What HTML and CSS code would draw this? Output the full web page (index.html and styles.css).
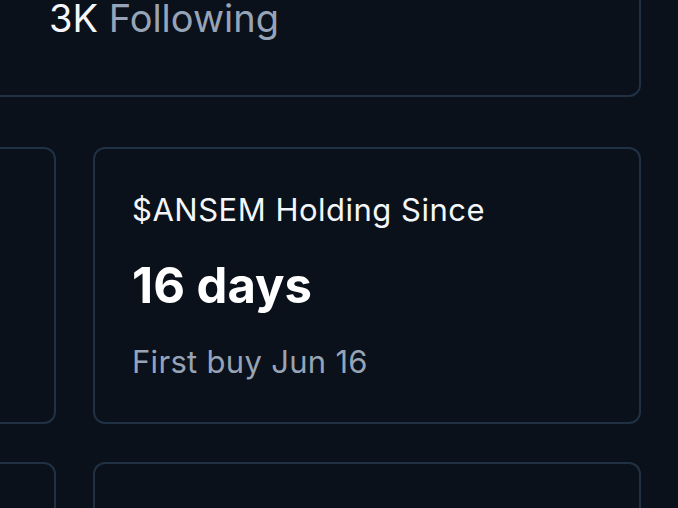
FILE: index.html
```html
<!DOCTYPE html>
<html lang="en">
<head>
<meta charset="utf-8">
<title>Profile</title>
<link rel="stylesheet" href="styles.css">
</head>
<body>
<div class="page">
  <section class="card profile">
    <div class="stats">
      <span class="stat"><span class="num">3K</span> <span class="label">Following</span></span>
    </div>
  </section>
  <div class="grid">
    <section class="card metric"></section>
    <section class="card metric">
      <div class="metric-title">$ANSEM Holding Since</div>
      <div class="metric-value">16 days</div>
      <div class="metric-sub">First buy Jun 16</div>
    </section>
    <section class="card metric"></section>
    <section class="card metric"></section>
  </div>
</div>
</body>
</html>
```

FILE: styles.css
```css
html, body {
  margin: 0;
  padding: 0;
  background: #0a111a;
  overflow: hidden;
}
body {
  font-family: Inter, "Noto Sans", sans-serif;
  color: #f4f6f9;
  height: 508px;
}
.page {
  width: 1133px;
  margin: -122px 0 0 -492px;
  display: flex;
  flex-direction: column;
  gap: 50px;
}
.card {
  border: 2px solid #213144;
  border-radius: 12px;
  box-sizing: border-box;
  background: #0a111a;
}
.profile {
  padding: 120px 40px 59px 40px;
}
.stats {
  display: flex;
  padding-left: 499px;
}
.stat {
  font-size: 38px;
  line-height: 36px;
}
.num { color: #f4f6f9; }
.label { color: #97a3b6; }
.grid {
  display: grid;
  grid-template-columns: 548px 548px;
  gap: 38px 37px;
}
.metric {
  height: 277px;
  padding: 41px 38px 35px 37px;
  display: flex;
  flex-direction: column;
}
.metric-title {
  font-size: 31px;
  line-height: 40px;
  letter-spacing: 0.5px;
  color: #f4f6f9;
}
.metric-value {
  margin-top: 26px;
  font-size: 49px;
  line-height: 60px;
  font-weight: 700;
  color: #ffffff;
}
.metric-sub {
  margin-top: 26px;
  font-size: 31px;
  line-height: 40px;
  letter-spacing: 0.3px;
  color: #97a3b6;
}
```
